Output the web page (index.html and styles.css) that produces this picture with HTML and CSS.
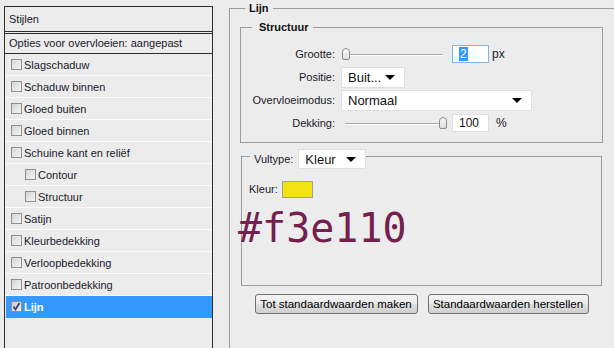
FILE: index.html
```html
<!DOCTYPE html>
<html lang="nl">
<head>
    <meta charset="UTF-8">
    <meta name="viewport" content="width=device-width, initial-scale=1.0">
    <title>Laagstijl - Lijn</title>
    <link rel="stylesheet" href="styles.css">
</head>
<body>
    <div class="dialog">
        <div class="styles-panel">
            <div class="panel-head">Stijlen</div>
            <div class="blend-row">Opties voor overvloeien: aangepast</div>
            <ul class="effect-list">
                <li><span class="check"></span>Slagschaduw</li>
                <li><span class="check"></span>Schaduw binnen</li>
                <li><span class="check"></span>Gloed buiten</li>
                <li><span class="check"></span>Gloed binnen</li>
                <li><span class="check"></span>Schuine kant en reliëf</li>
                <li class="sub"><span class="check"></span>Contour</li>
                <li class="sub"><span class="check"></span>Structuur</li>
                <li><span class="check"></span>Satijn</li>
                <li><span class="check"></span>Kleurbedekking</li>
                <li><span class="check"></span>Verloopbedekking</li>
                <li><span class="check"></span>Patroonbedekking</li>
                <li class="selected">
                    <span class="check">
                        <svg width="11" height="11" viewBox="0 0 11 11"><path d="M2.5 5.5 L4.5 8.5 L8.5 2" fill="none" stroke="#2a3b78" stroke-width="1.6"/></svg>
                    </span>Lijn
                </li>
            </ul>
        </div>

        <fieldset class="group group-main">
            <legend class="title">Lijn</legend>

            <fieldset class="group group-structure">
                <legend class="title">Structuur</legend>
                <div class="form-row">
                    <label class="field-label">Grootte:</label>
                    <div class="slider"><span class="thumb"></span></div>
                    <span class="num-box focused"><span class="selection">2</span></span>
                    <span class="unit">px</span>
                </div>
                <div class="form-row">
                    <label class="field-label">Positie:</label>
                    <div class="select select-short">Buit...<i class="arrow"></i></div>
                </div>
                <div class="form-row row-mode">
                    <label class="field-label">Overvloeimodus:</label>
                    <div class="select select-wide">Normaal<i class="arrow"></i></div>
                </div>
                <div class="form-row row-opacity">
                    <label class="field-label">Dekking:</label>
                    <div class="slider slider-end"><span class="thumb"></span></div>
                    <span class="num-box">100</span>
                    <span class="unit unit-pct">%</span>
                </div>
            </fieldset>

            <fieldset class="group group-fill">
                <legend class="fill-legend">
                    <span class="fill-label">Vultype:</span>
                    <div class="select select-fill">Kleur<i class="arrow"></i></div>
                </legend>
                <div class="color-row">
                    <span>Kleur:</span>
                    <span class="swatch"></span>
                </div>
                <div class="hex">#f3e110</div>
            </fieldset>

            <div class="buttons">
                <button type="button" class="btn btn-make">Tot standaardwaarden maken</button>
                <button type="button" class="btn btn-reset">Standaardwaarden herstellen</button>
            </div>
        </fieldset>
    </div>
</body>
</html>
```

FILE: styles.css
```css
body {
    margin: 0;
    background: #ececec;
    font-family: "Liberation Sans", Arial, sans-serif;
    font-size: 11px;
    color: #1a1a2a;
    overflow: hidden;
}
.dialog {
    display: flex;
    align-items: flex-start;
    height: 348px;
    overflow: hidden;
}

/* left list */
.styles-panel {
    width: 207px;
    height: 342px;
    margin: 6px 0 0 4px;
    border: 1px solid #2e2e2e;
    border-bottom: 0;
    flex-shrink: 0;
}
.panel-head {
    height: 24px;
    line-height: 24px;
    padding-left: 4px;
    border-bottom: 3px double #2e2e2e;
}
.blend-row {
    height: 19px;
    line-height: 19px;
    padding-left: 4px;
    border-bottom: 1px solid #2e2e2e;
}
.effect-list {
    list-style: none;
    margin: 0;
    padding: 0;
}
.effect-list li {
    height: 21px;
    display: flex;
    align-items: center;
    padding-left: 6px;
    border-bottom: 1px solid #fbfbfb;
}
.effect-list li.sub {
    padding-left: 20px;
}
.effect-list li.selected {
    margin-left: 1px;
    padding-left: 5px;
    background: #3399ff;
    color: #fff;
    font-weight: bold;
    border-bottom-color: #3399ff;
}
.check {
    width: 11px;
    height: 11px;
    box-sizing: border-box;
    margin-right: 2px;
    border: 1px solid #8f9090;
    background: linear-gradient(135deg, #d6d6d6, #f4f4f4);
    display: inline-flex;
}
.selected .check {
    background: linear-gradient(135deg, #c9c9c9, #ececec);
}
.check svg {
    margin: -1px;
}

/* right side */
fieldset.group {
    margin: 0;
    min-width: 0;
    border: 1px solid #9c9c9c;
    box-sizing: border-box;
}
.title {
    font-weight: bold;
    line-height: 14px;
    color: #111;
}
.group-main {
    width: 400px;
    height: 347px;
    margin-top: 1px !important;
    margin-left: 16px !important;
    padding: 5px 0 0 10px;
    border-bottom: 0 !important;
    flex-shrink: 0;
}
.group-main > legend {
    margin-left: 5px;
    padding: 0 4px;
}
.group-structure {
    width: 363px;
    padding: 10px 0 6px 0;
}
.group-structure > legend {
    margin-left: 11px;
    padding: 0 4px 0 7px;
}
.form-row {
    display: flex;
    align-items: center;
    height: 20px;
    margin-bottom: 3px;
}
.row-mode {
    margin-top: 1px;
}
.field-label {
    width: 94px;
    text-align: right;
    margin-right: 6px;
    flex-shrink: 0;
}
.slider {
    width: 105px;
    height: 13px;
    margin-left: 1px;
    display: flex;
    align-items: center;
    background:
        linear-gradient(#a9a9a9, #a9a9a9) 3px 6px / 98px 1px no-repeat,
        linear-gradient(#ffffff, #ffffff) 3px 7px / 98px 1px no-repeat;
}
.slider-end {
    justify-content: flex-end;
}
.thumb {
    width: 8px;
    height: 12px;
    box-sizing: border-box;
    border: 1px solid #8b8b8b;
    border-radius: 4px 4px 2px 2px;
    background: linear-gradient(#fbfbfb, #dcdcdc);
}
.num-box {
    width: 37px;
    height: 18px;
    box-sizing: border-box;
    margin-left: 5px;
    padding-left: 6px;
    border: 1px solid #dedede;
    background: #fff;
    font-size: 12px;
    line-height: 16px;
    color: #111;
}
.num-box.focused {
    border-color: #7eb4ea;
}
.selection {
    background: #3399ff;
    color: #fff;
    padding: 0 1px;
}
.unit {
    margin-left: 3px;
    font-size: 12px;
}
.unit-pct {
    margin-left: 7px;
}
.select {
    height: 21px;
    box-sizing: border-box;
    display: flex;
    align-items: center;
    justify-content: space-between;
    padding: 0 9px 0 6px;
    border: 1px solid #e0e0e0;
    background: #fff;
    font-size: 13px;
    color: #111;
}
.select-short {
    width: 64px;
}
.select-wide {
    width: 191px;
}
.select-fill {
    width: 68px;
    height: 20px;
    margin-left: 5px;
}
.arrow {
    width: 0;
    height: 0;
    border-left: 5px solid transparent;
    border-right: 5px solid transparent;
    border-top: 5px solid #000;
}

.group-fill {
    width: 361px;
    height: 137px;
    margin: 6px 0 0 1px !important;
    padding: 17px 0 0 7px;
}
.fill-legend {
    display: flex;
    align-items: flex-start;
    height: 14px;
    margin-left: 1px;
    padding: 0 0 0 4px;
}
.fill-label {
    line-height: 20px;
}
.color-row {
    display: flex;
    align-items: center;
    height: 18px;
}
.swatch {
    width: 31px;
    height: 17px;
    box-sizing: border-box;
    margin-left: 4px;
    border: 1px solid #a0a0a0;
    background: #f3e110;
}
.hex {
    margin: 9px 0 0 -11px;
    font-family: "DejaVu Sans Mono", monospace;
    font-size: 40px;
    line-height: 42px;
    color: #741f4d;
}

.buttons {
    width: 361px;
    margin: 8px 0 0 1px;
    display: flex;
    justify-content: center;
    gap: 10px;
}
.btn {
    height: 20px;
    padding: 0;
    border: 1px solid #707070;
    border-radius: 3px;
    background: linear-gradient(#f3f3f3 0%, #ebebeb 50%, #dedede 51%, #d0d0d0 100%);
    font-family: "Liberation Sans", Arial, sans-serif;
    font-size: 11.5px;
    color: #000;
}
.btn-make {
    width: 163px;
}
.btn-reset {
    width: 161px;
}
```
